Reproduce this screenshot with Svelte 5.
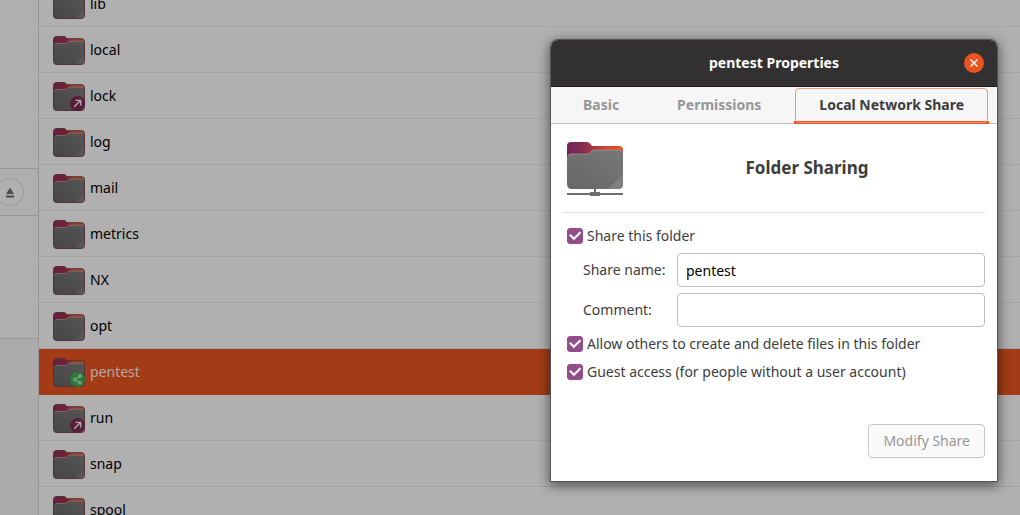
<script>
  const folders = [
    { name: 'lib' },
    { name: 'local' },
    { name: 'lock', emblem: 'link' },
    { name: 'log' },
    { name: 'mail' },
    { name: 'metrics' },
    { name: 'NX' },
    { name: 'opt' },
    { name: 'pentest', emblem: 'share' },
    { name: 'run', emblem: 'link' },
    { name: 'snap' },
    { name: 'spool' }
  ];
  const tabs = ['Basic', 'Permissions', 'Local Network Share'];
  let selected = $state('pentest');
  let active = $state('Local Network Share');
  let shared = $state(true);
  let writable = $state(true);
  let guest = $state(true);
  let shareName = $state('pentest');
  let comment = $state('');
</script>

<div class="files">
  <aside class="sidebar">
    <div class="places"></div>
    <div class="mounts">
      <button class="eject" aria-label="Eject">
        <svg width="10" height="11" viewBox="0 0 10 11"><path d="M5 0.5 9 7H1z M1 8.5h8v2H1z" fill="#4b4b4b" /></svg>
      </button>
    </div>
    <div class="network"></div>
  </aside>

  <main class="list">
    {#each folders as folder}
      <button class="row" class:selected={selected === folder.name} onclick={() => (selected = folder.name)}>
        <svg class="folder" width="32" height="32" viewBox="0 -1 32 32">
          <defs>
            <linearGradient id="tab" x1="0" x2="1">
              <stop offset="0" stop-color="#661f3d" />
              <stop offset="0.45" stop-color="#752339" />
              <stop offset="0.6" stop-color="#a33a22" />
              <stop offset="1" stop-color="#a74220" />
            </linearGradient>
            <linearGradient id="front" x1="0" y1="1" x2="1" y2="0">
              <stop offset="0" stop-color="#464646" />
              <stop offset="1" stop-color="#555" />
            </linearGradient>
          </defs>
          <path d="M3.5 1.5h7.5q1 0 1.700.8l1.300 1.400h14.500q3 0 3 3V26.500q0 3-3 3h-25q-3 0-3-3V4.500q0-3 3-3z" fill="url(#tab)" stroke="#54323c" />
          <path d="M4 8.500h8.500q1 0 1.700-.8l.8-.7q.8-.8 2-.8h11.500q2.500 0 2.500 2.500V26.500q0 2.500-2.500 2.500h-25Q1 29 1 26.500V11.500q0-3 3-3z" fill="url(#front)" />
          <path d="M1.500 10q.5-1.500 2.500-1.500h8.500q1 0 1.700-.8l.8-.7q.8-.8 2-.8h11.500q2 0 2.300 1.300" fill="none" stroke="#777" stroke-width=".8" />
          <path d="M31 20.500v6q0 2.500-2.500 2.500H22.500z" fill="#606060" opacity=".6" />
          {#if folder.emblem === 'link'}
            <circle cx="24.500" cy="22.500" r="7.500" fill="#581d3b" />
            <path d="M21.200 25.800l6.300-6.300M22.500 19.300h5.200v5.200" fill="none" stroke="#b0b0b0" stroke-width="1.300" />
          {:else if folder.emblem === 'share'}
            <circle cx="24.500" cy="22.500" r="7.500" fill="#277c35" />
            <path d="M27 19.200l-5.500 3.300 5.500 3.300" fill="none" stroke="#aaa" />
            <g fill="#277c35" stroke="#b0b0b0">
              <circle cx="27" cy="19.200" r="1.300" />
              <circle cx="21.700" cy="22.500" r="1.300" />
              <circle cx="27" cy="25.800" r="1.300" />
            </g>
          {/if}
        </svg>
        <span>{folder.name}</span>
      </button>
    {/each}
  </main>
</div>

<div class="dialog" role="dialog" aria-labelledby="dialog-title">
  <header>
    <h1 id="dialog-title">pentest Properties</h1>
    <button class="close" aria-label="Close">
      <svg width="10" height="10" viewBox="0 0 10 10"><path d="M1.500 1.500l7 7M8.500 1.500l-7 7" stroke="#fff" stroke-width="1.400" /></svg>
    </button>
  </header>

  <div class="tabs" role="tablist">
    {#each tabs as tab}
      <button role="tab" aria-selected={active === tab} class:active={active === tab} onclick={() => (active = tab)}>{tab}</button>
    {/each}
  </div>

  <form class="panel" onsubmit={(e) => e.preventDefault()}>
    <div class="intro">
      <svg width="58" height="56" viewBox="0 0 58 56">
        <defs>
          <linearGradient id="bigtab" x1="0" x2="1">
            <stop offset="0" stop-color="#772160" />
            <stop offset="0.200" stop-color="#7c2a52" />
            <stop offset="0.450" stop-color="#a23345" />
            <stop offset="0.750" stop-color="#d74a2c" />
            <stop offset="1" stop-color="#e95420" />
          </linearGradient>
          <linearGradient id="bigfront" x1="0" y1="1" x2="1" y2="0">
            <stop offset="0" stop-color="#666" />
            <stop offset="1" stop-color="#787878" />
          </linearGradient>
        </defs>
        <path d="M4 1h16q2 0 3 1.500L25 5h27q4 0 4 4v16H0V5q0-4 4-4z" fill="url(#bigtab)" />
        <path d="M4 13h17q1 0 2-1l2-2q1-1 2-1h25q4 0 4 4v30q0 5-5 5H5q-5 0-5-5V17q0-4 4-4z" fill="url(#bigfront)" />
        <path d="M1 15q1-2 3-2h17q1 0 2-1l2-2q1-1 2-1h25q2 0 3 1.500" fill="none" stroke="#999" stroke-width=".8" />
        <path d="M56 33v10q0 5-5 5H41z" fill="#808080" />
        <path d="M27 48h2v3h4v1h23v2H33v1H23v-1H0v-2h23v-1h4z" fill="#707070" />
      </svg>
      <h2>Folder Sharing</h2>
    </div>

    <label class="check"><input type="checkbox" bind:checked={shared} />Share this folder</label>
    <div class="fields">
      <label for="share-name">Share name:</label>
      <input id="share-name" type="text" bind:value={shareName} />
      <label for="comment">Comment:</label>
      <input id="comment" type="text" bind:value={comment} />
    </div>
    <label class="check"><input type="checkbox" bind:checked={writable} />Allow others to create and delete files in this folder</label>
    <label class="check"><input type="checkbox" bind:checked={guest} />Guest access (for people without a user account)</label>

    <button class="modify" disabled>Modify Share</button>
  </form>
</div>

<style>
  :global(body) {
    overflow: hidden;
    font: 14px/20px "Noto Sans", "Open Sans", sans-serif;
    color: #3d3d3d;
  }
  * { box-sizing: border-box; }
  button, input { font: inherit; color: inherit; }
  h1, h2 { margin: 0; }
  svg { display: block; flex: none; }

  .files { display: flex; height: 100vh; overflow: hidden; background: #b0b0b0; }
  .sidebar {
    display: flex;
    flex-direction: column;
    flex: 0 0 39px;
    background: #ababab;
    border-right: 1px solid #959595;
  }
  .places { height: 169px; border-bottom: 1px solid #969696; }
  .mounts { display: flex; align-items: center; height: 47px; border-bottom: 1px solid #969696; }
  .network { height: 123px; background: #afafaf; border-bottom: 1px solid #969696; }
  .places, .mounts { background: #afafaf; }
  .eject {
    display: grid;
    place-items: center;
    width: 28px;
    height: 28px;
    margin-left: -4px;
    padding: 0;
    border: 1px solid #999;
    border-radius: 50%;
    background: #b1b1b1;
  }

  .list { flex: 1; min-width: 0; margin-top: -19px; }
  .row {
    display: flex;
    align-items: center;
    gap: 5px;
    width: 100%;
    height: 46px;
    padding: 0 14px;
    border: 0;
    border-bottom: 1px solid #a4a4a4;
    background: none;
    color: #000;
    text-align: left;
  }
  .row.selected { background: #a33b17; border-color: #a33b17; color: #b4aaa6; }

  .dialog {
    position: absolute;
    top: 40px;
    right: 23px;
    width: 446px;
    border-radius: 7px 7px 0 0;
    background: #fff;
    box-shadow: 0 0 0 1px #555, 0 3px 12px 2px rgba(0, 0, 0, 0.5);
  }
  header {
    display: grid;
    grid-template-columns: 1fr auto 1fr;
    align-items: center;
    height: 47px;
    padding: 0 13px;
    border-bottom: 1px solid #1d1b1c;
    border-radius: 7px 7px 0 0;
    background: #323031;
    color: #fff;
  }
  h1 { grid-column: 2; font-size: 14px; line-height: 20px; }
  .close {
    display: grid;
    place-items: center;
    justify-self: end;
    width: 20px;
    height: 20px;
    padding: 0;
    border: 0;
    border-radius: 50%;
    background: #e95420;
  }

  .tabs {
    display: flex;
    justify-content: space-between;
    height: 37px;
    padding: 0 8px;
    border-bottom: 1px solid #bfbfbf;
    background: #f6f6f6;
  }
  .tabs button {
    position: relative;
    height: 37px;
    padding: 2px 25px 0;
    border: 0;
    border-bottom: 3px solid transparent;
    background: none;
    color: #979797;
    font-weight: bold;
  }
  .tabs button:first-child { padding-left: 24px; }
  .tabs button.active { border-color: #e95420; color: #3d3d3d; }
  .tabs button.active::after {
    content: "";
    position: absolute;
    inset: 1px 1px -2px;
    border: 1px solid #f29879;
    border-radius: 4px;
  }

  .panel { display: flex; flex-direction: column; padding: 17px 12px 23px; }
  .intro {
    display: flex;
    align-items: center;
    height: 72px;
    padding: 0 0 16px 4px;
    border-bottom: 1px solid #dedede;
  }
  h2 { flex: 1; font-size: 17px; line-height: 22px; text-align: center; padding: 0 0 2px 4px; }

  .check { display: flex; align-items: center; gap: 4px; height: 28px; padding-left: 4px; }
  .intro + .check { margin-top: 9px; }
  .check input {
    display: grid;
    place-items: center;
    appearance: none;
    flex: none;
    width: 16px;
    height: 16px;
    margin: 0;
    border: 1px solid #924d8b;
    border-radius: 3px;
    background: #fff;
  }
  .check input:checked { background: #924d8b; }
  .check input:checked::before {
    content: "";
    width: 14px;
    height: 12px;
    background: #fff;
    clip-path: polygon(8% 46%, 18% 34%, 42% 60%, 84% 12%, 94% 24%, 42% 86%);
  }
  .fields {
    display: grid;
    grid-template-columns: 82px 1fr;
    align-items: center;
    gap: 6px 12px;
    padding: 3px 0 3px 20px;
  }
  .fields label { white-space: nowrap; }
  .fields input {
    width: 100%;
    height: 34px;
    padding: 0 8px;
    border: 1px solid #bdbdbd;
    border-radius: 4px;
    background: #fff;
    color: #000;
  }
  .modify {
    align-self: flex-end;
    height: 34px;
    margin-top: 38px;
    padding: 0 14px;
    border: 1px solid #c4c4c4;
    border-radius: 4px;
    background: #fafafa;
    color: #979797;
  }
</style>
